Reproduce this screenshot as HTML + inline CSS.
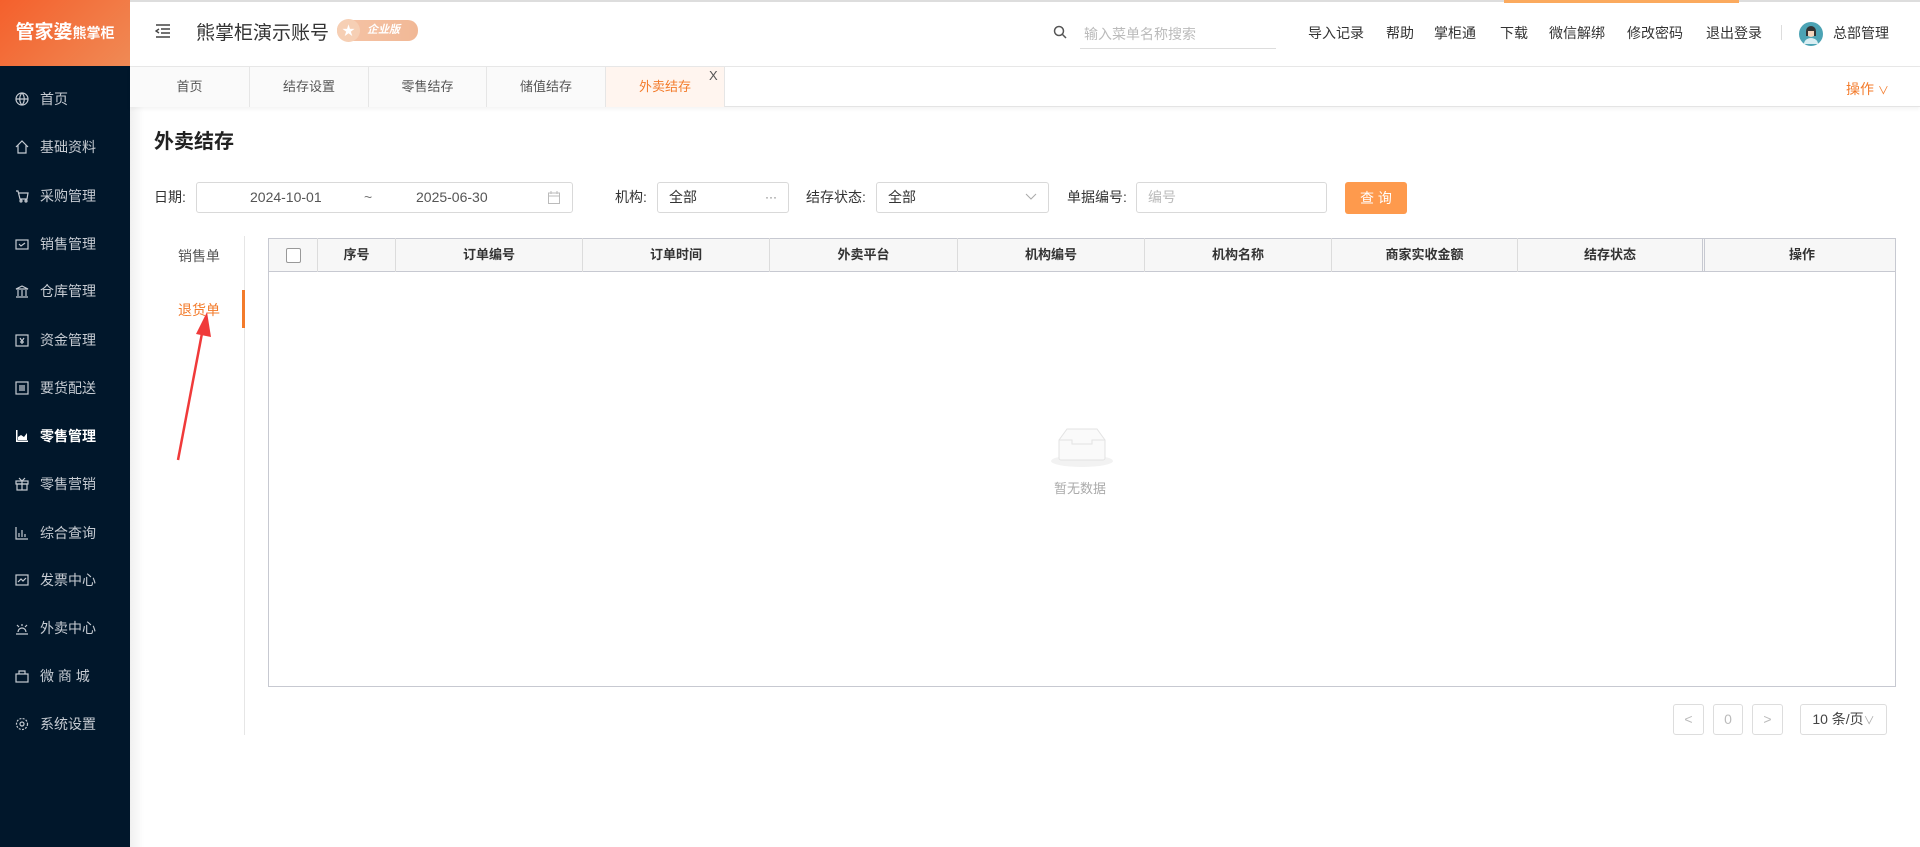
<!DOCTYPE html>
<html><head><meta charset="utf-8"><style>
*{margin:0;padding:0;box-sizing:border-box}
body{width:1920px;height:847px;overflow:hidden;background:#fff;font-family:"Liberation Sans","Noto Sans CJK SC",sans-serif;position:relative;color:#333}
.a{position:absolute;white-space:nowrap}
#side{left:0;top:0;width:130px;height:847px;background:#01172b}
#logo{left:0;top:0;width:130px;height:66px;background:linear-gradient(135deg,#f4602c,#f08a55);color:#fff;font-weight:bold;font-size:19px;line-height:66px;text-align:center}
.mi{left:0;width:130px;height:40px;line-height:40px;color:#c6cbd2;font-size:14px}
.mi .ic{position:absolute;left:15px;top:13px;width:14px;height:14px}
.mi span{position:absolute;left:40px}
.hl{font-size:14px;color:#333;top:23px}
.tab{top:67px;height:40px;line-height:40px;text-align:center;font-size:13px;color:#555;background:#fafafa;border-right:1px solid #e6e6e6}
.box{border:1px solid #d9d9d9;border-radius:3px;height:31px;top:182px;background:#fff}
.lbl{top:182px;line-height:31px;font-size:14px;color:#333}
.th{top:238px;height:34px;line-height:34px;text-align:center;font-size:13px;font-weight:bold;color:#333;border-right:1px solid #dcdcdc}
.pg{top:704px;height:31px;border:1px solid #ddd;border-radius:3px;text-align:center;line-height:29px;color:#bbb;font-size:14px}
</style></head><body>
<div class="a" style="left:0;top:0;width:1920px;height:2px;background:#ddd"></div>
<div class="a" style="left:1504px;top:0;width:235px;height:3px;background:#fbaa5e"></div>
<div class="a" id="side"></div>
<div class="a" id="logo">管家婆<span style="font-size:14px">熊掌柜</span></div>
<div class="a" style="left:130px;top:66px;width:14px;height:781px;background:linear-gradient(90deg,rgba(0,0,0,.06),rgba(0,0,0,0))"></div>

<div class="a mi" style="top:79px"><svg class="ic" viewBox="0 0 14 14" fill="none" stroke="#c6cbd2" stroke-width="1.2"><circle cx="7" cy="7" r="6"/><path d="M1 7h12M7 1c-3 3-3 9 0 12M7 1c3 3 3 9 0 12"/></svg><span>首页</span></div>
<div class="a mi" style="top:127px"><svg class="ic" viewBox="0 0 14 14" fill="none" stroke="#c6cbd2" stroke-width="1.2"><path d="M1 7L7 1l6 6M3 5v8h8V5"/></svg><span>基础资料</span></div>
<div class="a mi" style="top:176px"><svg class="ic" viewBox="0 0 14 14" fill="none" stroke="#c6cbd2" stroke-width="1.2"><path d="M1 2h2l2 8h7l1-6H4"/><circle cx="6" cy="12" r="1"/><circle cx="11" cy="12" r="1"/></svg><span>采购管理</span></div>
<div class="a mi" style="top:224px"><svg class="ic" viewBox="0 0 14 14" fill="none" stroke="#c6cbd2" stroke-width="1.2"><rect x="1" y="3" width="12" height="9"/><path d="M4 7l2 2 4-3"/></svg><span>销售管理</span></div>
<div class="a mi" style="top:271px"><svg class="ic" viewBox="0 0 14 14" fill="none" stroke="#c6cbd2" stroke-width="1.2"><path d="M1 5l6-3 6 3zM3 6v6M7 6v6M11 6v6M1 13h12"/></svg><span>仓库管理</span></div>
<div class="a mi" style="top:320px"><svg class="ic" viewBox="0 0 14 14" fill="none" stroke="#c6cbd2" stroke-width="1.2"><rect x="1" y="2" width="12" height="11"/><path d="M5 5l2 3 2-3M7 8v3M5 9h4"/></svg><span>资金管理</span></div>
<div class="a mi" style="top:368px"><svg class="ic" viewBox="0 0 14 14" fill="none" stroke="#c6cbd2" stroke-width="1.2"><rect x="1" y="1" width="12" height="12"/><path d="M4 5h6M4 7h6M4 9h6"/></svg><span>要货配送</span></div>
<div class="a mi" style="top:416px;color:#fff;font-weight:bold"><svg class="ic" viewBox="0 0 14 14" fill="#fff"><path d="M1 1h1.5v10.5H13V13H1z"/><path d="M3 11V8l3-2 3 2 3-4v7z"/></svg><span>零售管理</span></div>
<div class="a mi" style="top:464px"><svg class="ic" viewBox="0 0 14 14" fill="none" stroke="#c6cbd2" stroke-width="1.2"><rect x="1" y="4" width="12" height="3"/><rect x="2" y="7" width="10" height="6"/><path d="M7 4v9M4 1l3 3 3-3"/></svg><span>零售营销</span></div>
<div class="a mi" style="top:513px"><svg class="ic" viewBox="0 0 14 14" fill="none" stroke="#c6cbd2" stroke-width="1.2"><path d="M1 1v12h12M4 11V7M7 11V4M10 11V8"/></svg><span>综合查询</span></div>
<div class="a mi" style="top:560px"><svg class="ic" viewBox="0 0 14 14" fill="none" stroke="#c6cbd2" stroke-width="1.2"><rect x="1" y="2" width="12" height="10"/><path d="M3 9l3-3 2 2 3-3"/></svg><span>发票中心</span></div>
<div class="a mi" style="top:608px"><svg class="ic" viewBox="0 0 14 14" fill="none" stroke="#c6cbd2" stroke-width="1.2"><path d="M3 11a4 4 0 018 0M1 13h12M7 3v2M2 4l2 2M12 4l-2 2"/></svg><span>外卖中心</span></div>
<div class="a mi" style="top:656px"><svg class="ic" viewBox="0 0 14 14" fill="none" stroke="#c6cbd2" stroke-width="1.2"><rect x="1" y="5" width="12" height="8"/><path d="M4 5V2h6v3"/></svg><span>微 商 城</span></div>
<div class="a mi" style="top:704px"><svg class="ic" viewBox="0 0 14 14" fill="none" stroke="#c6cbd2" stroke-width="1.2"><circle cx="7" cy="7" r="2"/><circle cx="7" cy="7" r="5.5" stroke-dasharray="2 1.3"/></svg><span>系统设置</span></div>

<!-- header -->
<div class="a" style="left:130px;top:66px;width:1790px;height:1px;background:#e8e8e8"></div>
<svg class="a" style="left:155px;top:24px" width="16" height="14" viewBox="0 0 16 14" fill="none" stroke="#444" stroke-width="1.4"><path d="M1 1h14M6 5h9M6 9h9M1 13h14M4 5L1 7l3 2"/></svg>
<div class="a" style="left:196px;top:18px;font-size:19px;color:#333">熊掌柜演示账号</div>
<div class="a" style="left:337px;top:20px;width:81px;height:21px;border-radius:10px;background:linear-gradient(90deg,#f6c4a6,#f1b896);color:#fff;font-size:11px;font-style:italic;font-weight:bold;line-height:21px;padding-left:30px">企业版</div>
<div class="a" style="left:337px;top:19px;width:23px;height:23px;border-radius:50%;background:#f6cfb4;color:#fff;font-size:13px;text-align:center;line-height:23px">★</div>
<svg class="a" style="left:1053px;top:25px" width="14" height="14" viewBox="0 0 14 14" fill="none" stroke="#555" stroke-width="1.5"><circle cx="6" cy="6" r="4.5"/><path d="M9.5 9.5L13 13"/></svg>
<div class="a" style="left:1084px;top:24px;font-size:14px;color:#bbb">输入菜单名称搜索</div>
<div class="a" style="left:1080px;top:48px;width:196px;height:1px;background:#ddd"></div>
<div class="a hl" style="left:1308px">导入记录</div>
<div class="a hl" style="left:1386px">帮助</div>
<div class="a hl" style="left:1434px">掌柜通</div>
<div class="a hl" style="left:1500px">下载</div>
<div class="a hl" style="left:1549px">微信解绑</div>
<div class="a hl" style="left:1627px">修改密码</div>
<div class="a hl" style="left:1706px">退出登录</div>
<div class="a" style="left:1781px;top:25px;width:1px;height:15px;background:#ddd"></div>
<svg class="a" style="left:1799px;top:22px" width="24" height="24" viewBox="0 0 24 24"><circle cx="12" cy="12" r="12" fill="#4ca3b4"/><circle cx="12" cy="10" r="5" fill="#f4d5bd"/><path d="M7 9a5 5 0 0110 0v5h-2V9H9v5H7z" fill="#333"/><path d="M5 22a7 6 0 0114 0z" fill="#d9eef3"/></svg>
<div class="a hl" style="left:1833px">总部管理</div>

<!-- tabs -->
<div class="a" style="left:130px;top:67px;width:1790px;height:40px;background:#fff;border-bottom:1px solid #e4e4e4;box-shadow:0 2px 4px rgba(0,0,0,.05)"></div>
<div class="a tab" style="left:130px;width:120px">首页</div>
<div class="a tab" style="left:250px;width:119px">结存设置</div>
<div class="a tab" style="left:369px;width:118px">零售结存</div>
<div class="a tab" style="left:487px;width:119px">储值结存</div>
<div class="a tab" style="left:606px;width:119px;color:#f37b2b;background:#fff5ef">外卖结存</div>
<div class="a" style="left:709px;top:68px;font-size:13px;color:#555">X</div>
<div class="a" style="left:1846px;top:79px;font-size:14px;color:#f37b2b">操作 <span style="font-size:11px">∨</span></div>

<div class="a" style="left:154px;top:125px;font-size:20px;font-weight:bold;color:#222">外卖结存</div>

<!-- form -->
<div class="a lbl" style="left:154px">日期:</div>
<div class="a box" style="left:196px;width:377px"></div>
<div class="a lbl" style="left:250px;color:#555">2024-10-01</div>
<div class="a lbl" style="left:364px;color:#777">~</div>
<div class="a lbl" style="left:416px;color:#555">2025-06-30</div>
<svg class="a" style="left:548px;top:191px" width="12" height="13" viewBox="0 0 12 13" fill="none" stroke="#bbb"><rect x=".5" y="2" width="11" height="10.5"/><path d="M.5 5h11M3 0v3M9 0v3"/></svg>
<div class="a lbl" style="left:615px">机构:</div>
<div class="a box" style="left:657px;width:132px"></div>
<div class="a lbl" style="left:669px;color:#333">全部</div>
<div class="a lbl" style="left:765px;color:#777;font-size:12px">···</div>
<div class="a lbl" style="left:806px">结存状态:</div>
<div class="a box" style="left:876px;width:173px"></div>
<div class="a lbl" style="left:888px">全部</div>
<svg class="a" style="left:1025px;top:193px" width="12" height="8" viewBox="0 0 12 8" fill="none" stroke="#aaa"><path d="M1 1l5 5 5-5"/></svg>
<div class="a lbl" style="left:1067px">单据编号:</div>
<div class="a box" style="left:1136px;width:191px"></div>
<div class="a lbl" style="left:1148px;color:#bbb">编号</div>
<div class="a" style="left:1345px;top:182px;width:62px;height:32px;background:#fe9a4d;border-radius:3px;color:#fff;font-size:14px;line-height:32px;text-align:center">查 询</div>

<!-- left tabs -->
<div class="a" style="left:244px;top:236px;width:1px;height:499px;background:#e6e6e6"></div>
<div class="a" style="left:242px;top:290px;width:3px;height:38px;background:#f37b2b"></div>
<div class="a" style="left:178px;top:246px;font-size:14px;color:#555">销售单</div>
<div class="a" style="left:178px;top:300px;font-size:14px;color:#f37b2b">退货单</div>

<!-- table -->
<div class="a" style="left:268px;top:238px;width:1628px;height:449px;border:1px solid #c7c9d1"></div>
<div class="a" style="left:269px;top:239px;width:1626px;height:33px;background:#f7f7f7;border-bottom:1px solid #c7c9d1"></div>
<div class="a th" style="left:269px;width:49px"><span style="display:inline-block;width:15px;height:15px;border:1px solid #999;border-radius:2px;vertical-align:middle;background:#fff"></span></div>
<div class="a th" style="left:318px;width:78px">序号</div>
<div class="a th" style="left:396px;width:187px">订单编号</div>
<div class="a th" style="left:583px;width:187px">订单时间</div>
<div class="a th" style="left:770px;width:188px">外卖平台</div>
<div class="a th" style="left:958px;width:187px">机构编号</div>
<div class="a th" style="left:1145px;width:187px">机构名称</div>
<div class="a th" style="left:1332px;width:186px">商家实收金额</div>
<div class="a th" style="left:1518px;width:187px;border-right:3px double #c7c9d1">结存状态</div>
<div class="a th" style="left:1709px;width:186px;border-right:none">操作</div>

<svg class="a" style="left:1050px;top:426px" width="64" height="42" viewBox="0 0 64 42"><ellipse cx="32" cy="35" rx="31" ry="6" fill="#f2f2f2"/><path d="M9 14l8-11h30l8 11v18a2 2 0 01-2 2H11a2 2 0 01-2-2z" fill="#fafafa" stroke="#e3e3e3"/><path d="M9 14h13v4h20v-4h13" fill="none" stroke="#e3e3e3"/></svg>
<div class="a" style="left:1054px;top:478px;font-size:13px;color:#aaa">暂无数据</div>

<!-- pagination -->
<div class="a pg" style="left:1673px;width:31px">&lt;</div>
<div class="a pg" style="left:1713px;width:30px">0</div>
<div class="a pg" style="left:1752px;width:31px">&gt;</div>
<div class="a pg" style="left:1800px;width:87px;color:#444;font-size:14px">10 条/页<span style="color:#aaa;font-size:11px">∨</span></div>

<!-- red arrow -->
<svg class="a" style="left:170px;top:310px" width="50" height="155" viewBox="0 0 50 155"><path d="M8 150L33 18" stroke="#f03a3a" stroke-width="2.5"/><path d="M37 2L26 24l15 3z" fill="#f03a3a"/></svg>
</body></html>
